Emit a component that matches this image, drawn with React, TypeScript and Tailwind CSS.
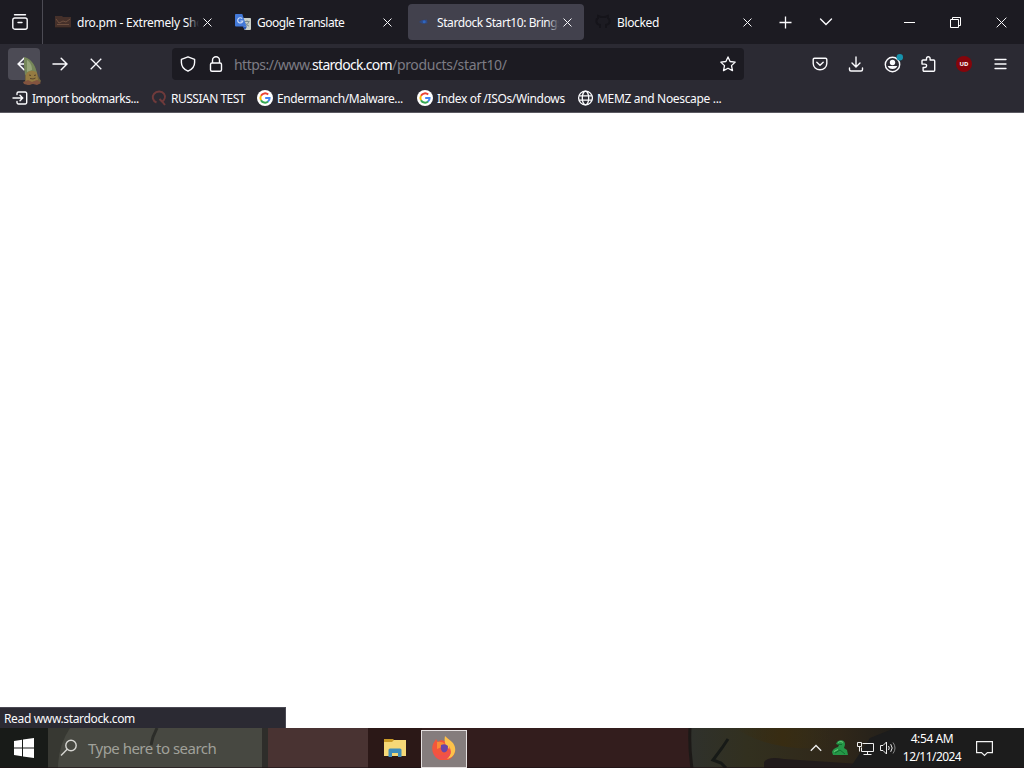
import type { ReactNode } from "react";

const IconX = ({ size = 10, w = 1.2 }: { size?: number; w?: number }) => (
  <svg width={size} height={size} viewBox="0 0 10 10" stroke="#fbfbfe" strokeWidth={w}>
    <path d="M.6.6l8.8 8.8M9.4.6L.6 9.4" />
  </svg>
);

const IconGoogle = () => (
  <svg width="16" height="16" viewBox="0 0 16 16" fill="none" strokeWidth="2">
    <circle cx="8" cy="8" r="8" fill="#fff" />
    <path d="M11.2 4.6A4.6 4.6 0 0 0 4 5.8" stroke="#ea4335" />
    <path d="M4 5.7a4.6 4.6 0 0 0 0 4.6" stroke="#fbbc05" />
    <path d="M4 10.2a4.6 4.6 0 0 0 7.1 1.3" stroke="#34a853" />
    <path d="M11 11.6A4.6 4.6 0 0 0 12.6 8H8.2" stroke="#4285f4" />
  </svg>
);

const IconTranslate = () => (
  <svg width="16" height="16" viewBox="0 0 16 16">
    <path d="M6 4h9.2a.8.8 0 0 1 .8.8V15a1 1 0 0 1-1 1H9.5z" fill="#c9cfc8" />
    <path d="M7.5 12.5L10 16l2-3.5z" fill="#2455b8" />
    <path d="M9.5 7.5h5M12 6.3v1.2M13.7 7.7c-.5 2-2 3.4-3.5 4.3M10.4 8.8c.8 1.6 2 2.7 3.6 3.3" stroke="#7b8d91" fill="none" />
    <path d="M.8 0h6.5l4.2 12.5H1A1 1 0 0 1 0 11.5V.8A.8.8 0 0 1 .8 0z" fill="#4379d8" />
    <path d="M7.2 4.6A2.6 2.6 0 1 0 7.8 7H5.4" stroke="#c9daf7" strokeWidth="1.2" fill="none" />
  </svg>
);

const IconDro = () => (
  <svg width="16" height="16" viewBox="0 0 16 16" fill="none">
    <path d="M0 2h7l1 1h8v11H0z" fill="#45302a" />
    <path d="M1 5l3 4 4-2 3 1 4-3M2 10.5h12" stroke="#6d4f3f" />
    <path d="M0 13.5h16" stroke="#2b211f" />
  </svg>
);

const IconStardock = () => (
  <svg width="16" height="16" viewBox="0 0 16 16">
    <path d="M4 8l3-2 5-.2.5 3.4-5 .5z" fill="#304a85" />
    <circle cx="9.2" cy="7.8" r="1.5" fill="#2f67c0" />
  </svg>
);

const IconOctocat = () => (
  <svg width="16" height="16" viewBox="0 0 16 16" fill="none" stroke="#15141a" strokeWidth="2">
    <path d="M5 14v-3C0 10 1 5 3 4V2l3 1h4l3-1v2c2 1 3 6-2 7v3" />
  </svg>
);

type TabProps = { title: string; icon: ReactNode; active?: boolean; tracking: string };

const Tab = ({ title, icon, active, tracking }: TabProps) => (
  <div className="flex w-[180px] shrink-0 px-0.5 py-1">
    <div
      className={`flex flex-1 items-center rounded pl-[7px] pr-[5px] ${
        active ? "bg-[#42414d]" : ""
      }`}
    >
      <span className="mr-1.5 shrink-0">{icon}</span>
      <span className={`relative mr-[-4px] w-[122px] shrink-0 overflow-hidden whitespace-nowrap pt-px leading-4 ${tracking}`}>
        {title}
        <span
          className={`absolute inset-y-0 right-0 w-3 bg-linear-to-r ${
            active ? "from-[#42414d]/0 to-[#42414d]" : "from-[#1c1b22]/0 to-[#1c1b22]"
          }`}
        />
      </span>
      <span className="flex w-6 shrink-0 justify-center">
        <IconX size={9} w={1.1} />
      </span>
    </div>
  </div>
);

const TabBar = () => (
  <div className="flex h-11 items-stretch bg-[#1c1b22]">
    <div className="mr-[3px] flex w-[43px] items-center border-r border-[#4c4b54] pl-3">
      <svg width="16" height="16" viewBox="0 0 16 16" fill="none" stroke="#fbfbfe" strokeWidth="1.4" strokeLinecap="round">
        <path d="M2.5.8h11" />
        <path d="M2.8 4h10.400a2 2 0 0 1 2 2v7.200a2 2 0 0 1-2 2H2.800a2 2 0 0 1-2-2V6a2 2 0 0 1 2-2zM6 8.500h4" />
      </svg>
    </div>
    <Tab title="dro.pm - Extremely Sho" icon={<IconDro />} tracking="tracking-[-0.25px]" />
    <Tab title="Google Translate" icon={<IconTranslate />} tracking="tracking-[-0.5px]" />
    <Tab title="Stardock Start10: Brings" icon={<IconStardock />} tracking="tracking-[-0.42px]" active />
    <Tab title="Blocked" icon={<IconOctocat />} tracking="tracking-[-0.35px]" />
    <div className="flex w-[39px] items-center justify-center">
      <svg width="13" height="13" viewBox="0 0 13 13" stroke="#fbfbfe" strokeWidth="1.3">
        <path d="M6.5.5v12M.5 6.5h12" />
      </svg>
    </div>
    <div className="flex w-[41px] items-center justify-center">
      <svg width="14" height="8" viewBox="0 0 14 8" fill="none" stroke="#fbfbfe" strokeWidth="1.4">
        <path d="M1.5 1L7 6.5 12.5 1" strokeLinecap="round" />
      </svg>
    </div>
    <div className="ml-auto flex">
      <div className="flex w-[46px] items-center justify-center">
        <svg width="11" height="11" viewBox="0 0 11 11" stroke="#fff">
          <path d="M0 5.5h11" />
        </svg>
      </div>
      <div className="flex w-[46px] items-center justify-center">
        <svg width="11" height="11" viewBox="0 0 11 11" fill="none" stroke="#fff">
          <path d="M.5 2.5h8v8h-8zM2.5 2.5v-2h8v8h-2" />
        </svg>
      </div>
      <div className="flex w-[46px] items-center justify-center">
        <IconX size={11} w={0.9} />
      </div>
    </div>
  </div>
);

const ToolButton = ({ children }: { children: ReactNode }) => (
  <div className="flex h-8 w-9 items-center justify-center">{children}</div>
);

// Gnome-shaped pointer resting on the back button
const Cursor = () => (
  <svg className="absolute left-[14px] top-[9px]" width="24" height="30" viewBox="0 0 24 30">
    <path d="M2 1c5 1 9 5 11 9l3 9 3 5-2 3-5-1-5 2-4-2V14z" fill="#75663f" />
    <path d="M2 0c5 1 9 5 11 10l2 6-6-1-6 3-1-10z" fill="#76875a" />
    <path d="M5 3c3 2 5 5 5 10l-5 2z" fill="#97a57a" />
    <path d="M4 17c3-4 8-4 11-1l1 7-6 2-6-1z" fill="#957b42" />
    <path d="M1 25l5-2 4 2 5-2 4 3-4 2-4-1-5 1-4-1z" fill="#83543f" />
    <path d="M7 18l2 .5m3 0l2-.5M8 21.500l3 .5 2.500-1" stroke="#57452b" fill="none" />
  </svg>
);

const NavBar = () => (
  <div className="flex h-10 items-center bg-[#2b2a33] pl-2 pr-1.5">
    <div className="relative z-10 flex size-8 items-center justify-center rounded bg-[#4c4b55]">
      <svg width="15" height="14" viewBox="0 0 15 14" fill="none" stroke="#fbfbfe" strokeWidth="1.6">
        <path d="M7 1.2L1.2 7 7 12.8M1.2 7H14" strokeLinecap="round" />
      </svg>
      <Cursor />
    </div>
    <div className="ml-1 flex size-8 items-center justify-center">
      <svg width="16" height="14" viewBox="0 0 16 14" fill="none" stroke="#fbfbfe" strokeWidth="1.5">
        <path d="M9.2 1.2L15 7l-5.8 5.8M15 7H1" strokeLinecap="round" />
      </svg>
    </div>
    <div className="ml-1 flex size-8 items-center justify-center">
      <IconX size={12} w={1.1} />
    </div>
    <div className="ml-[60px] flex h-8 w-[572px] items-center rounded bg-[#1c1b22] px-2">
      <svg width="16" height="16" viewBox="0 0 16 16" fill="none" stroke="#fbfbfe" strokeWidth="1.4">
        <path d="M8 .8l6.6 2.500v3.200c0 4-2.600 7-6.600 8.700C4 13.500 1.400 10.500 1.400 6.500V3.300z" strokeLinejoin="round" />
      </svg>
      <svg className="ml-3" width="16" height="16" viewBox="0 0 16 16" fill="none" stroke="#fbfbfe" strokeWidth="1.4">
        <rect x="2.5" y="7" width="11" height="8.2" rx="1.5" />
        <path d="M4.5 7V4.300a3.500 3.500 0 0 1 7 0V7" />
      </svg>
      <span className="ml-[10px] flex-1 whitespace-nowrap pt-px text-[14px] tracking-[-0.53px] text-[#7d7c84]">
        https://www.
        <span className="tracking-[-0.71px] text-[#fbfbfe]">stardock.com</span>
        <span className="tracking-[-0.32px]">/products/start10/</span>
      </span>
      <svg width="16" height="16" viewBox="0 0 16 16" fill="none" stroke="#fbfbfe" strokeWidth="1.3">
        <path d="M8 .9l2.100 4.600 5.100.6-3.700 3.500 1 5L8 12.200l-4.500 2.400 1-5L.8 6.100l5.100-.6z" strokeLinejoin="round" />
      </svg>
    </div>
    <div className="ml-auto flex">
      <ToolButton>
        <svg width="16" height="16" viewBox="0 0 16 16" fill="none" stroke="#fbfbfe" strokeWidth="1.4">
          <path d="M2.500 2.200h11a1.300 1.300 0 0 1 1.300 1.300v4a6.800 6.300 0 0 1-13.600 0v-4a1.300 1.300 0 0 1 1.300-1.300zM4.800 6.200L8 9.300l3.200-3.100" strokeLinecap="round" />
        </svg>
      </ToolButton>
      <ToolButton>
        <svg width="16" height="16" viewBox="0 0 16 16" fill="none" stroke="#fbfbfe" strokeWidth="1.4" strokeLinecap="round">
          <path d="M8 1v9.500M4 7l4 4 4-4M1.500 12v1.500A1.500 1.500 0 0 0 3 15h10a1.500 1.500 0 0 0 1.500-1.500V12" />
        </svg>
      </ToolButton>
      <ToolButton>
        <svg className="overflow-visible" width="20" height="20" viewBox="0 0 20 20" fill="none">
          <circle cx="10.5" cy="10.5" r="7.2" stroke="#fbfbfe" strokeWidth="1.4" />
          <circle cx="10.5" cy="8.5" r="2.7" fill="#fbfbfe" />
          <path d="M5.700 12h9.600a5 4.200 0 0 1-9.600 0z" fill="#fbfbfe" />
          <circle cx="17.8" cy="3.2" r="3.2" fill="#1693ae" />
        </svg>
      </ToolButton>
      <ToolButton>
        <svg width="16" height="16" viewBox="0 0 16 16" fill="none" stroke="#fbfbfe" strokeWidth="1.4" strokeLinejoin="round">
          <path d="M6.500 4V2.600a1.800 1.800 0 0 1 3.600 0V4h3.600a1 1 0 0 1 1 1v9.200a1 1 0 0 1-1 1H4.100a1 1 0 0 1-1-1v-2.700h1.800a1.700 1.700 0 0 0 0-3.400H2V5a1 1 0 0 1 1-1z" />
        </svg>
      </ToolButton>
      <ToolButton>
        <div className="flex size-4 items-center justify-center rounded-full bg-[#85050b] text-[6px] font-bold leading-none text-white">
          UD
        </div>
      </ToolButton>
      <ToolButton>
        <svg width="13" height="12" viewBox="0 0 13 12" stroke="#fbfbfe" strokeWidth="1.3" strokeLinecap="round">
          <path d="M1 1.500h11M1 6h11M1 10.500h11" />
        </svg>
      </ToolButton>
    </div>
  </div>
);

type BookmarkProps = { icon: ReactNode; label: string; width: string; tracking: string };

const Bookmark = ({ icon, label, width, tracking }: BookmarkProps) => (
  <div className={`flex shrink-0 items-center whitespace-nowrap ${width}`}>
    <span className="mr-1 shrink-0">{icon}</span>
    <span className={`pt-0.5 leading-4 ${tracking}`}>{label}</span>
  </div>
);

const BookmarksBar = () => (
  <div className="flex h-[29px] items-center border-b border-[#5b5a62] bg-[#2b2a33] pl-3">
    <Bookmark
      width="w-[139px]"
      label="Import bookmarks..."
      tracking="tracking-[-0.45px]"
      icon={
        <svg width="16" height="16" viewBox="0 0 16 16" fill="none" stroke="#fbfbfe" strokeWidth="1.4">
          <path d="M5 4.500V3.500A1.500 1.500 0 0 1 6.500 2h6.700a1.500 1.500 0 0 1 1.500 1.500v9a1.500 1.500 0 0 1-1.500 1.500H6.500A1.500 1.500 0 0 1 5 12.500v-1M1 8h9.500M8 5.300L10.700 8 8 10.700" strokeLinecap="round" />
        </svg>
      }
    />
    <Bookmark
      width="w-[106px]"
      label="RUSSIAN TEST"
      tracking="tracking-[-0.5px]"
      icon={
        <svg width="16" height="16" viewBox="0 0 16 16" fill="none" stroke="#6f3a3b" strokeWidth="2">
          <path d="M5.500 12.500C1.500 11 .8 6.500 3 3.800 5.500.8 11 .8 13 3.800c1.800 2.700.7 6-1.800 7.700L14 15M8.500 9l3 3" />
        </svg>
      }
    />
    <Bookmark
      width="w-[160px]"
      label="Endermanch/Malware..."
      tracking="tracking-[-0.4px]"
      icon={<IconGoogle />}
    />
    <Bookmark
      width="w-[160px]"
      label="Index of /ISOs/Windows"
      tracking="tracking-[-0.34px]"
      icon={<IconGoogle />}
    />
    <Bookmark
      width="w-[160px]"
      label="MEMZ and Noescape ..."
      tracking="tracking-[-0.33px]"
      icon={
        <svg width="16" height="16" viewBox="0 0 16 16" fill="none" stroke="#fbfbfe" strokeWidth="1.3">
          <circle cx="8.5" cy="8" r="6.9" />
          <ellipse cx="8.5" cy="8" rx="3.2" ry="6.9" />
          <path d="M2 5.800h13M2 10.200h13" />
        </svg>
      }
    />
  </div>
);

// Desktop wallpaper dimmed through the translucent taskbar
const TaskbarBackdrop = () => (
  <svg className="absolute inset-0" width="1024" height="40" viewBox="0 0 1024 40" fill="none">
    <defs>
      <linearGradient id="olive" x1="690" x2="920" y1="0" y2="0" gradientUnits="userSpaceOnUse">
        <stop offset="0" stopColor="#2f312c" />
        <stop offset=".25" stopColor="#32301f" />
        <stop offset=".65" stopColor="#302719" />
        <stop offset="1" stopColor="#1c1c1c" />
      </linearGradient>
      <linearGradient id="amber" x1="735" x2="830" y1="0" y2="0" gradientUnits="userSpaceOnUse">
        <stop offset="0" stopColor="#382c12" stopOpacity="0" />
        <stop offset=".5" stopColor="#382c12" />
        <stop offset="1" stopColor="#382c12" stopOpacity="0" />
      </linearGradient>
    </defs>
    <path d="M0 0h1024v40H0z" fill="#1c1c1c" />
    <path d="M0 0h48v40H0z" fill="#181b18" />
    <path d="M48 0h215v40H48z" fill="#373832" />
    <path d="M70 0h193v40H58q0-22 12-40z" fill="#474841" />
    <path d="M157 0l-4 9-2 8" stroke="#2c2d29" strokeWidth="3" />
    <path d="M262 0h7v40h-7z" fill="#2e2d2a" />
    <path d="M268 0h100v40H268z" fill="#493332" />
    <path d="M368 0h323v40H368z" fill="#331d1d" />
    <path d="M368 0h54v40h-54z" fill="#2b1817" />
    <path d="M691 0h229v40H691z" fill="url(#olive)" />
    <path d="M735 0h95v20q-60 4-95-20z" fill="url(#amber)" />
    <path d="M764 34q4-6 20-3l76 5v4h-96z" fill="#211b1b" />
    <path d="M870 10l25-10h129v40H850z" fill="#1c1c1c" />
    <path d="M690 0q-1 20 2 40" stroke="#1c1917" strokeWidth="3" />
    <path d="M728 11l-6 9-9 12 8 3 5 5" stroke="#171a17" strokeWidth="3" />
    <path d="M0 39.500h1024" stroke="#1c1014" strokeOpacity=".6" />
  </svg>
);

const Taskbar = () => (
  <div className="relative h-10">
    <TaskbarBackdrop />
    <div className="relative flex h-10 items-center">
      <div className="flex w-12 justify-center">
        <svg width="20" height="20" viewBox="0 0 20 20" fill="#fff">
          <path d="M0 3l8-1.200v7.700H0zM9 1.600L20 0v9.500H9zM0 10.500h8v7.700L0 17zM9 10.500h11V20L9 18.400z" />
        </svg>
      </div>
      <div className="flex w-[320px] items-center pl-3">
        <svg width="18" height="18" viewBox="0 0 18 18" fill="none" stroke="#d6d6d2" strokeWidth="1.4">
          <circle cx="11" cy="6.5" r="5.2" />
          <path d="M7.200 10.200L1 16.500" />
        </svg>
        <span className="ml-[10px] whitespace-nowrap text-[15px] tracking-[-0.52px] text-[#a0a19a]">
          Type here to search
        </span>
      </div>
      <div className="flex w-[53px] justify-center">
        <svg width="22" height="20" viewBox="0 0 22 20">
          <path d="M0 1h9l2 2h11v5H0z" fill="#c99a26" />
          <path d="M0 4h8l2-2h12v16H0z" fill="#f5d877" />
          <path d="M4.500 19v-7a1.500 1.500 0 0 1 1.500-1.500h10a1.500 1.500 0 0 1 1.500 1.500v7H14v-4H8v4z" fill="#3f8dbb" />
        </svg>
      </div>
      <div className="mt-0.5 flex h-[38px] w-[46px] items-center justify-center border border-[#e5e0e0] bg-[#857d7d]">
        <svg className="mb-0.5 mr-px" width="24" height="24" viewBox="0 0 24 24">
          <path d="M1 8l3-5 2 3 3-2 4 1 1-4 4 4 3 3c3 5 2 9 0 12-3 5-10 6-15 3-5-3-7-9-5-15z" fill="#f2563c" />
          <path d="M13 0c3 3 5 4 8 7 5 7 1 15-6 16 4-4 5-8 1-11-3-3-4-7-3-12z" fill="#fcc24a" />
          <path d="M1 14c2 5 8 7 13 4 3-2 4-5 3-8 5 8-1 14-8 13-4 0-7-4-8-9z" fill="#f0504e" />
          <path d="M5 6q5-1 8 2l-3 3-5 2z" fill="#fa8a35" />
          <path d="M9 9q4-2 7 1 0 6-4 6.500-4-1-3-7.500z" fill="#6a45a8" />
        </svg>
      </div>
      <div className="ml-auto flex items-center">
        <svg width="12" height="8" viewBox="0 0 12 8" fill="none" stroke="#eee" strokeWidth="1.3">
          <path d="M.8 6.800L6 1.500l5.200 5.300" />
        </svg>
        <svg className="ml-2.5" width="17" height="16" viewBox="0 0 17 16">
          <path d="M5 2c3-3 8-2 8 2 0 2-1 3-1 4l3 2 1 5H1l-1-3c1-3 3-4 6-5l1-2-3-1z" fill="#259748" />
          <path d="M6 4.500h4M3 13l5-3 5 4" stroke="#0f702f" fill="none" />
          <path d="M6 2.500c2-1.500 4-1 5 0M2 11.500l4-2" stroke="#6bcb7b" fill="none" />
        </svg>
        <svg className="ml-2" width="17" height="15" viewBox="0 0 17 15" fill="none" stroke="#eee">
          <path d="M5.500 2.500h11v8h-12v-4M.5 1.500h4v4h-4zM2.500 5.500v5M10.500 10.500v3M6.500 13.500h8" />
        </svg>
        <svg className="ml-1.5" width="18" height="14" viewBox="0 0 18 14" fill="none" stroke="#eee">
          <path d="M.5 4.500h2.500L6.500 1v12L3 9.500H.5zM8.500 5q1.500 2 0 4M10.700 3.200q3 3.800 0 7.600" />
          <path d="M13 1.500q4 5.500 0 11" stroke="#888" />
        </svg>
        <div className="ml-1 w-[60px] whitespace-nowrap text-center text-[12px] leading-[18px] text-white">
          <div className="tracking-[-0.4px]">4:54 AM</div>
          <div className="tracking-[-0.55px]">12/11/2024</div>
        </div>
        <svg className="ml-3.5 mr-[31px]" width="17" height="17" viewBox="0 0 17 17" fill="none" stroke="#f2f2f2" strokeWidth="1.2">
          <path d="M.6 1.600h15.800v11h-5L8.500 15.500l-3-2.900H.6z" />
        </svg>
      </div>
    </div>
  </div>
);

export default function App() {
  return (
    <div className="flex h-[768px] w-[1024px] flex-col overflow-hidden bg-white font-['Noto_Sans','Open_Sans',sans-serif] text-[12px] text-[#fbfbfe]">
      <TabBar />
      <NavBar />
      <BookmarksBar />
      <div className="flex flex-1 items-end">
        <div className="flex h-[21px] w-[286px] items-center border-r border-t border-[#4a4953] bg-[#2b2a33] pl-1 pt-0.5 tracking-[-0.35px]">
          Read www.stardock.com
        </div>
      </div>
      <Taskbar />
    </div>
  );
}
